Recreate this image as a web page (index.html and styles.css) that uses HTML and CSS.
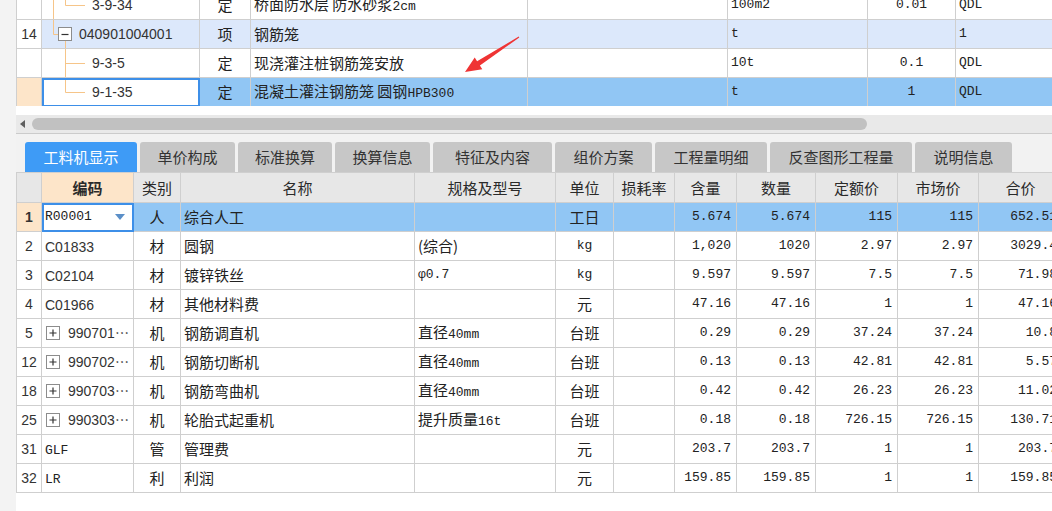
FILE: index.html
```html
<!DOCTYPE html>
<html lang="zh-CN">
<head>
<meta charset="utf-8">
<title>工料机显示</title>
<link rel="stylesheet" href="styles.css">
</head>
<body>
<div class="app">
  <div class="gutter"></div>
  <div class="main">
    <div class="top-grid">
      <table class="grid grid-top">
        <colgroup>
          <col class="w-rn"><col class="w-tcode"><col class="w-ttype"><col class="w-tname"><col class="w-tspec"><col class="w-tunit"><col class="w-tqty"><col class="w-tsrc">
        </colgroup>
        <tbody>
          <tr>
            <td class="rn"></td>
            <td class="code"><div class="tree"><svg class="tree-svg" width="50" height="28" viewBox="0 0 50 28"><path d="M11.5 0V28M23.5 0V14.5H43" /></svg><span class="tcode">3-9-34</span></div></td>
            <td class="c">定</td>
            <td>桥面防水层 防水砂浆<span class="m">2cm</span></td>
            <td></td>
            <td class="m">100m2</td>
            <td class="c m">0.01</td>
            <td class="m">QDL</td>
          </tr>
          <tr class="row-parent">
            <td class="rn rn-white m">14</td>
            <td class="code"><div class="tree tree-parent"><svg class="tree-svg" width="32" height="28" viewBox="0 0 32 28"><path d="M11.5 0V14.5H16M23.5 21V28" /><rect class="box" x="16.5" y="7.5" width="13" height="13" /><path class="sign" d="M19.5 14.5H26.5" /></svg><span class="tcode">040901004001</span></div></td>
            <td class="c">项</td>
            <td>钢筋笼</td>
            <td></td>
            <td class="m">t</td>
            <td class="c m"></td>
            <td class="m">1</td>
          </tr>
          <tr>
            <td class="rn"></td>
            <td class="code"><div class="tree"><svg class="tree-svg" width="50" height="28" viewBox="0 0 50 28"><path d="M23.5 0V28M23.5 14.5H43" /></svg><span class="tcode">9-3-5</span></div></td>
            <td class="c">定</td>
            <td>现浇灌注桩钢筋笼安放</td>
            <td></td>
            <td class="m">10t</td>
            <td class="c m">0.1</td>
            <td class="m">QDL</td>
          </tr>
          <tr class="row-sel">
            <td class="rn rn-sel"></td>
            <td class="code focus"><div class="tree"><svg class="tree-svg" width="50" height="28" viewBox="0 0 50 28"><path d="M23.5 0V14.5H43" /></svg><span class="tcode">9-1-35</span></div></td>
            <td class="c">定</td>
            <td>混凝土灌注钢筋笼 圆钢<span class="m">HPB300</span></td>
            <td></td>
            <td class="m">t</td>
            <td class="c m">1</td>
            <td class="m">QDL</td>
          </tr>
        </tbody>
      </table>
    </div>

    <div class="hgap"></div>
    <div class="hscroll">
      <span class="scroll-arrow"></span>
      <span class="scroll-thumb"></span>
    </div>

    <div class="tabbar">
      <div class="tab active">工料机显示</div>
      <div class="tab">单价构成</div>
      <div class="tab">标准换算</div>
      <div class="tab">换算信息</div>
      <div class="tab">特征及内容</div>
      <div class="tab">组价方案</div>
      <div class="tab">工程量明细</div>
      <div class="tab">反查图形工程量</div>
      <div class="tab">说明信息</div>
    </div>

    <div class="bottom-grid">
      <table class="grid grid-bottom">
        <colgroup>
          <col class="w-rn"><col class="w-code"><col class="w-type"><col class="w-name"><col class="w-spec"><col class="w-unit"><col class="w-loss"><col class="w-cont"><col class="w-qty"><col class="w-quota"><col class="w-market"><col class="w-total">
        </colgroup>
        <thead>
          <tr>
            <th></th>
            <th class="th-key">编码</th>
            <th>类别</th>
            <th>名称</th>
            <th>规格及型号</th>
            <th>单位</th>
            <th>损耗率</th>
            <th>含量</th>
            <th>数量</th>
            <th>定额价</th>
            <th>市场价</th>
            <th>合价</th>
          </tr>
        </thead>
        <tbody>
          <tr class="row-sel">
            <td class="rn rn-sel rn-bold">1</td>
            <td class="code focus"><div class="code-drop"><span class="m">R00001</span><svg width="10" height="6" viewBox="0 0 10 6"><path class="drop" d="M0 0H10L5 6Z"/></svg></div></td>
            <td class="c">人</td>
            <td>综合人工</td>
            <td></td>
            <td class="c">工日</td>
            <td></td>
            <td class="r m">5.674</td>
            <td class="r m">5.674</td>
            <td class="r m">115</td>
            <td class="r m">115</td>
            <td class="r m">652.51</td>
          </tr>
          <tr>
            <td class="rn">2</td>
            <td class="code"><span class="scode">C01833</span></td>
            <td class="c">材</td>
            <td>圆钢</td>
            <td>(综合)</td>
            <td class="c m">kg</td>
            <td></td>
            <td class="r m">1,020</td>
            <td class="r m">1020</td>
            <td class="r m">2.97</td>
            <td class="r m">2.97</td>
            <td class="r m">3029.4</td>
          </tr>
          <tr>
            <td class="rn">3</td>
            <td class="code"><span class="scode">C02104</span></td>
            <td class="c">材</td>
            <td>镀锌铁丝</td>
            <td class="m">φ0.7</td>
            <td class="c m">kg</td>
            <td></td>
            <td class="r m">9.597</td>
            <td class="r m">9.597</td>
            <td class="r m">7.5</td>
            <td class="r m">7.5</td>
            <td class="r m">71.98</td>
          </tr>
          <tr>
            <td class="rn">4</td>
            <td class="code"><span class="scode">C01966</span></td>
            <td class="c">材</td>
            <td>其他材料费</td>
            <td></td>
            <td class="c">元</td>
            <td></td>
            <td class="r m">47.16</td>
            <td class="r m">47.16</td>
            <td class="r m">1</td>
            <td class="r m">1</td>
            <td class="r m">47.16</td>
          </tr>
          <tr>
            <td class="rn">5</td>
            <td class="code"><div class="code-exp"><svg width="14" height="14" viewBox="0 0 14 14"><rect class="box" x="0.5" y="0.5" width="13" height="13"/><path class="sign" d="M3.5 7H10.5M7 3.5V10.5"/></svg><span class="scode">990701⋯</span></div></td>
            <td class="c">机</td>
            <td>钢筋调直机</td>
            <td>直径<span class="m">40mm</span></td>
            <td class="c">台班</td>
            <td></td>
            <td class="r m">0.29</td>
            <td class="r m">0.29</td>
            <td class="r m">37.24</td>
            <td class="r m">37.24</td>
            <td class="r m">10.8</td>
          </tr>
          <tr>
            <td class="rn">12</td>
            <td class="code"><div class="code-exp"><svg width="14" height="14" viewBox="0 0 14 14"><rect class="box" x="0.5" y="0.5" width="13" height="13"/><path class="sign" d="M3.5 7H10.5M7 3.5V10.5"/></svg><span class="scode">990702⋯</span></div></td>
            <td class="c">机</td>
            <td>钢筋切断机</td>
            <td>直径<span class="m">40mm</span></td>
            <td class="c">台班</td>
            <td></td>
            <td class="r m">0.13</td>
            <td class="r m">0.13</td>
            <td class="r m">42.81</td>
            <td class="r m">42.81</td>
            <td class="r m">5.57</td>
          </tr>
          <tr>
            <td class="rn">18</td>
            <td class="code"><div class="code-exp"><svg width="14" height="14" viewBox="0 0 14 14"><rect class="box" x="0.5" y="0.5" width="13" height="13"/><path class="sign" d="M3.5 7H10.5M7 3.5V10.5"/></svg><span class="scode">990703⋯</span></div></td>
            <td class="c">机</td>
            <td>钢筋弯曲机</td>
            <td>直径<span class="m">40mm</span></td>
            <td class="c">台班</td>
            <td></td>
            <td class="r m">0.42</td>
            <td class="r m">0.42</td>
            <td class="r m">26.23</td>
            <td class="r m">26.23</td>
            <td class="r m">11.02</td>
          </tr>
          <tr>
            <td class="rn">25</td>
            <td class="code"><div class="code-exp"><svg width="14" height="14" viewBox="0 0 14 14"><rect class="box" x="0.5" y="0.5" width="13" height="13"/><path class="sign" d="M3.5 7H10.5M7 3.5V10.5"/></svg><span class="scode">990303⋯</span></div></td>
            <td class="c">机</td>
            <td>轮胎式起重机</td>
            <td>提升质量<span class="m">16t</span></td>
            <td class="c">台班</td>
            <td></td>
            <td class="r m">0.18</td>
            <td class="r m">0.18</td>
            <td class="r m">726.15</td>
            <td class="r m">726.15</td>
            <td class="r m">130.71</td>
          </tr>
          <tr>
            <td class="rn">31</td>
            <td class="code"><span class="m">GLF</span></td>
            <td class="c">管</td>
            <td>管理费</td>
            <td></td>
            <td class="c">元</td>
            <td></td>
            <td class="r m">203.7</td>
            <td class="r m">203.7</td>
            <td class="r m">1</td>
            <td class="r m">1</td>
            <td class="r m">203.7</td>
          </tr>
          <tr>
            <td class="rn">32</td>
            <td class="code"><span class="m">LR</span></td>
            <td class="c">利</td>
            <td>利润</td>
            <td></td>
            <td class="c">元</td>
            <td></td>
            <td class="r m">159.85</td>
            <td class="r m">159.85</td>
            <td class="r m">1</td>
            <td class="r m">1</td>
            <td class="r m">159.85</td>
          </tr>
        </tbody>
      </table>
    </div>
  </div>

  <svg class="annot" width="70" height="50" viewBox="0 0 70 50">
    <polygon points="5,42 14.7,27.4 17.1,31.2 58.7,6.6 59.3,7.4 19.9,35.4 22.3,39.2" />
  </svg>
</div>
</body>
</html>
```

FILE: styles.css
```css
* { box-sizing: border-box; }

html, body {
  margin: 0;
  padding: 0;
}

body {
  width: 1052px;
  height: 511px;
  overflow: hidden;
  background: #ffffff;
  font-family: "Noto Sans CJK SC", "Noto Sans", sans-serif;
  font-size: 15px;
  color: #222222;
}

.app {
  position: relative;
  display: flex;
  height: 511px;
}

.gutter {
  width: 16px;
  flex: none;
  background: #f3f3f3;
}

.main {
  flex: 1;
  min-width: 0;
  display: flex;
  flex-direction: column;
  overflow: hidden;
}

/* ---------- generic grid ---------- */
.grid {
  border-collapse: collapse;
  table-layout: fixed;
}

.grid td,
.grid th {
  border: 1px solid #cfcfcf;
  padding: 0 3px;
  height: 29px;
  white-space: nowrap;
  overflow: hidden;
  text-align: left;
  vertical-align: middle;
  line-height: 20px;
}

.grid .c { text-align: center; }
.grid .r { text-align: right; padding-right: 5px; }

.m {
  font-family: "Liberation Mono", monospace;
  font-size: 13px;
}

.rn {
  text-align: center !important;
  padding: 0 !important;
  background: #ffffff;
  font-family: "Liberation Sans", sans-serif;
  font-size: 14px;
  color: #333333;
}

.rn-sel { background: #fde5c9 !important; }
.rn-bold { font-weight: bold; }

.code { padding: 0 !important; }

.focus {
  background: #ffffff !important;
  outline: 2px solid #3d8fe8;
  outline-offset: -2px;
}

/* ---------- top grid ---------- */
.top-grid {
  height: 106px;
  flex: none;
  overflow: hidden;
}

.grid-top {
  width: 1044px;
  margin-top: -10px;
}

.w-rn { width: 25px; }
.w-tcode { width: 158px; }
.w-ttype { width: 51px; }
.w-tname { width: 277px; }
.w-tspec { width: 200px; }
.w-tunit { width: 140px; }
.w-tqty { width: 88px; }
.w-tsrc { width: 105px; }

.row-parent td { background: #dce8fb; }
.row-parent td.rn-white { background: #ffffff; }

.row-sel td { background: #91c6f4; }

.tree {
  display: flex;
  align-items: center;
  height: 28px;
}

.tree-svg {
  flex: none;
  display: block;
}

.tree-svg path {
  fill: none;
  stroke: #f6c589;
  stroke-width: 1;
}

.tree-parent .tree-svg { margin-right: 5px; }

.box {
  fill: #ffffff;
  stroke: #8c8c8c;
  stroke-width: 1;
}

.tree-svg path.sign,
.sign {
  fill: none;
  stroke: #333333;
  stroke-width: 1.2;
}

.tcode,
.scode {
  font-family: "Liberation Sans", sans-serif;
  font-size: 14px;
  color: #333333;
}

/* ---------- scroll bar ---------- */
.hgap {
  height: 9px;
  flex: none;
  background: #ffffff;
}

.hscroll {
  height: 19px;
  flex: none;
  display: flex;
  align-items: center;
  background: #e9e9e9;
  border-bottom: 1px solid #cbcbcb;
}

.scroll-arrow {
  width: 0;
  height: 0;
  margin-left: 4px;
  border-top: 4px solid transparent;
  border-bottom: 4px solid transparent;
  border-right: 5px solid #5f5f5f;
}

.scroll-thumb {
  width: 835px;
  height: 12px;
  margin-left: 7px;
  border-radius: 6px;
  background: #c1c1c1;
}

/* ---------- tabs ---------- */
.tabbar {
  height: 38px;
  flex: none;
  background: #f2f2f2;
  padding: 8px 0 0 9px;
  display: grid;
  grid-template-columns: 112px 95px 94px 95px 119px 97px 112px 142px 97px;
  column-gap: 3px;
}

.tab {
  height: 30px;
  line-height: 30px;
  text-align: center;
  background: #c7c7c7;
  color: #333333;
  border-radius: 3px 3px 0 0;
  font-size: 15px;
  white-space: nowrap;
}

.tab.active {
  background: #3e9bf6;
  color: #ffffff;
}

/* ---------- bottom grid ---------- */
.bottom-grid {
  flex: 1;
  overflow: hidden;
}

.grid-bottom { width: 1046px; }

.w-code { width: 92px; }
.w-type { width: 47px; }
.w-name { width: 234px; }
.w-spec { width: 141px; }
.w-unit { width: 58px; }
.w-loss { width: 61px; }
.w-cont { width: 62px; }
.w-qty { width: 79px; }
.w-quota { width: 82px; }
.w-market { width: 81px; }
.w-total { width: 84px; }

.grid-bottom th {
  height: 30px;
  background: #e7e7e7;
  font-weight: normal;
  text-align: center;
  color: #2a2a2a;
}

.grid-bottom th.th-key {
  background: #fde5c9;
  font-weight: bold;
}

.grid-bottom td.code { padding-left: 3px !important; }

.code-drop {
  display: flex;
  align-items: center;
  justify-content: space-between;
  padding-right: 8px;
}

.drop { fill: #5b8fc8; }

.code-exp {
  display: flex;
  align-items: center;
  gap: 8px;
}

.code-exp svg {
  flex: none;
  display: block;
  margin-left: 1px;
}

/* ---------- annotation arrow ---------- */
.annot {
  position: absolute;
  left: 460px;
  top: 30px;
  pointer-events: none;
}

.annot polygon { fill: #ef3434; }
```
